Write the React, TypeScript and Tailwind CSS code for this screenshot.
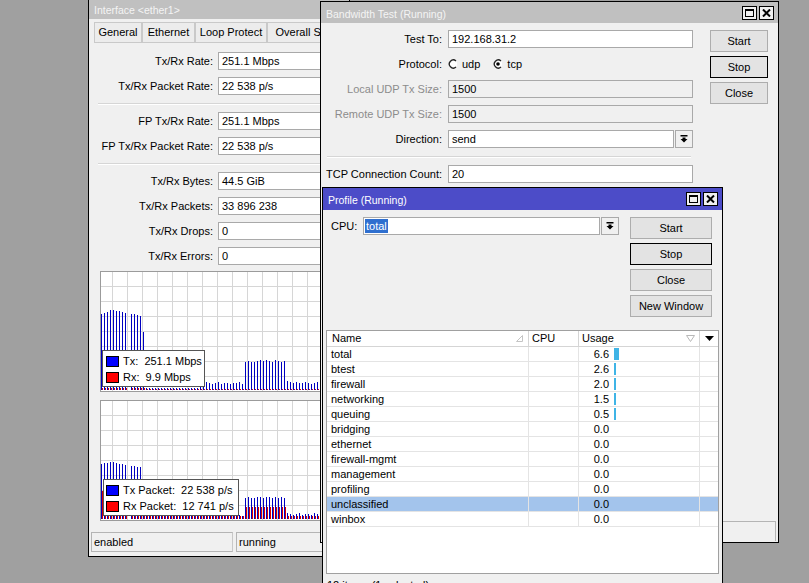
import React from 'react';

const range = (n: number, f: (i: number) => number) => Array.from({ length: n }, (_, i) => f(i));

const tx1 = range(84, (i) => {
  if (i <= 8) return [76, 77, 78, 80, 80, 79, 79, 78, 77][i];
  if (i === 9) return 0;
  if (i <= 13) return [76, 76, 75, 74][i - 10];
  if (i === 14) return 58;
  if (i < 33) return 2;
  if (i < 48) return [11, 9, 8, 7, 6, 7, 8, 6, 7, 7, 6, 7, 7, 8, 6][i - 33];
  if (i < 62) return [28, 29, 28, 28, 29, 30, 29, 30, 29, 28, 30, 29, 28, 29][i - 48];
  return [9, 8, 7, 8, 7, 7, 8, 7, 6, 7, 8, 7, 7, 6, 7, 8, 7, 7, 8, 7, 7, 8][i - 62] ?? 7;
});
const rx1 = range(84, (i) => (i === 9 ? 0 : i < 15 ? 2 : 1));

const tx2 = range(84, (i) => {
  if (i <= 8) return [55, 56, 56, 57, 57, 56, 55, 55, 54][i];
  if (i === 9) return 0;
  if (i <= 13) return [53, 53, 52, 52][i - 10];
  if (i === 14) return 40;
  if (i < 48) return i % 2 ? 3 : 4;
  if (i < 62) return [21, 22, 21, 21, 22, 22, 21, 22, 22, 21, 22, 21, 22, 21][i - 48];
  return [6, 5, 4, 5, 6, 4, 5, 5, 4, 6, 5, 4, 5, 6, 4, 5, 5, 4, 6, 5, 4, 5][i - 62] ?? 5;
});
const rx2 = range(84, (i) => {
  if (i === 9) return 0;
  if (i <= 14) return [28, 29, 30, 30, 29, 29, 28, 29, 28][i] ?? 28;
  if (i < 48) return 3;
  if (i < 62) return 12;
  return 3;
});

const WinButtons = () => (
  <div className="flex gap-[2px]">
    <div className="w-[15px] h-[14px] border border-black bg-[#f0f0f0] flex items-center justify-center">
      <div className="w-[9px] h-[8px] border border-black border-t-2" />
    </div>
    <div className="w-[15px] h-[14px] border border-black bg-[#f0f0f0] flex items-center justify-center">
      <svg width="9" height="8" viewBox="0 0 9 8">
        <path d="M1 0.5 L8 7.5 M8 0.5 L1 7.5" stroke="black" strokeWidth="2" />
      </svg>
    </div>
  </div>
);

const DropArrow = () => (
  <svg width="8" height="8" viewBox="0 0 8 8">
    <rect x="0.5" y="0" width="7" height="1.5" fill="black" />
    <path d="M2.5 2.5h3v1.5h2L4 7.5 0.5 4h2z" fill="black" />
  </svg>
);

const Radio = ({ checked }: { checked?: boolean }) => (
  <svg width="10" height="10" viewBox="0 0 10 10">
    <circle cx="5" cy="5" r="4" fill="white" />
    <path d="M8 2 A4 4 0 1 0 8 8" fill="none" stroke="#222" strokeWidth="1.3" />
    {checked && <circle cx="5" cy="5" r="1.8" fill="black" />}
  </svg>
);

const Box = ({ value, disabled, className = '' }: { value: string; disabled?: boolean; className?: string }) => (
  <div
    className={`h-[18px] border border-[#a9a9a9] flex items-center pl-[3px] whitespace-nowrap overflow-hidden ${
      disabled ? 'bg-[#f0f0f0]' : 'bg-white'
    } ${className}`}
  >
    {value}
  </div>
);

const Btn = ({ children, focus, className = '' }: { children: React.ReactNode; focus?: boolean; className?: string }) => (
  <div
    className={`h-[22px] flex items-center justify-center border bg-[#e3e3e3] ${
      focus ? 'border-black' : 'border-[#adadad]'
    } ${className}`}
  >
    {children}
  </div>
);

const Separator = ({ className = '' }: { className?: string }) => (
  <div className={`h-[2px] border-t border-[#d6d6d6] border-b border-b-white ${className}`} />
);

const Graph = ({ tx, rx, children }: { tx: number[]; rx: number[]; children: React.ReactNode }) => {
  const W = 250;
  const H = 121;
  return (
    <div className="relative w-[250px] h-[121px]">
      <svg width={W} height={H} className="block">
        <rect x="0.5" y="0.5" width={W - 1} height={H - 1} fill="white" stroke="#9b9b9b" />
        {range(16, (k) => 12 + 15 * k).map((x) => (
          <line key={'v' + x} x1={x + 0.5} x2={x + 0.5} y1={1} y2={H - 1} stroke="#d6d6d6" />
        ))}
        {range(7, (k) => 15 + 15 * k).map((y) => (
          <line key={'h' + y} x1={1} x2={W - 1} y1={y + 0.5} y2={y + 0.5} stroke="#d6d6d6" />
        ))}
        {tx.map((h, i) =>
          h > 0 ? <rect key={'t' + i} x={1 + 3 * i} y={H - 2 - h} width={1} height={h} fill="#0000c0" /> : null
        )}
        {rx.map((h, i) =>
          h > 0 ? <rect key={'r' + i} x={2 + 3 * i} y={H - 2 - h} width={1} height={h} fill="#d80000" /> : null
        )}
      </svg>
      {children}
    </div>
  );
};

const LegendRow = ({ color, label }: { color: string; label: string }) => (
  <div className="flex items-center h-[16px] whitespace-pre">
    <div className={`w-[13px] h-[11px] border border-black ${color}`} />
    <span className="ml-[4px]">{label}</span>
  </div>
);

const InterfaceWindow = () => {
  const groups = [
    [
      ['Tx/Rx Rate:', '251.1 Mbps'],
      ['Tx/Rx Packet Rate:', '22 538 p/s'],
    ],
    [
      ['FP Tx/Rx Rate:', '251.1 Mbps'],
      ['FP Tx/Rx Packet Rate:', '22 538 p/s'],
    ],
    [
      ['Tx/Rx Bytes:', '44.5 GiB'],
      ['Tx/Rx Packets:', '33 896 238'],
      ['Tx/Rx Drops:', '0'],
      ['Tx/Rx Errors:', '0'],
    ],
  ];
  const tabs = [
    ['General', 'w-[48px]'],
    ['Ethernet', 'w-[53px]'],
    ['Loop Protect', 'w-[72px]'],
    ['Overall Stats', 'w-[80px]'],
  ];
  return (
    <div className="absolute left-[88px] top-[-2px] w-[262px] h-[559px] border border-black bg-[#f0f0f0] flex flex-col overflow-hidden">
      <div className="h-[20px] shrink-0 bg-[#c0c0c0] text-[#f4f4f4] text-[10.5px] flex items-center pl-[5px] pt-[2px]">
        Interface &lt;ether1&gt;
      </div>
      <div className="flex mt-[3px] ml-[5px] h-[21px] shrink-0">
        {tabs.map(([t, w]) => (
          <div
            key={t}
            className={`${w} shrink-0 border border-[#c9c9c9] bg-[#ececec] flex items-center justify-center whitespace-nowrap`}
          >
            {t}
          </div>
        ))}
      </div>
      {groups.map((g, gi) => (
        <React.Fragment key={gi}>
          {gi > 0 && <Separator className="mt-[8px] ml-[9px] shrink-0" />}
          <div className={`flex flex-col gap-[7px] ${gi === 0 ? 'mt-[9px]' : 'mt-[7px]'}`}>
            {g.map(([l, v]) => (
              <div key={l} className="flex items-center">
                <div className="w-[124px] shrink-0 text-right whitespace-nowrap">{l}</div>
                <Box value={v} className="ml-[5px] w-[125px] shrink-0" />
              </div>
            ))}
          </div>
        </React.Fragment>
      ))}
      <div className="mt-[6px] ml-[11px] shrink-0">
        <Graph tx={tx1} rx={rx1}>
          <div className="absolute left-[2px] top-[79px] w-[103px] h-[37px] bg-white border border-[#555] pl-[3px] pt-[2px]">
            <LegendRow color="bg-[#0000ff]" label="Tx:  251.1 Mbps" />
            <LegendRow color="bg-[#ff0000]" label="Rx:  9.9 Mbps" />
          </div>
        </Graph>
      </div>
      <div className="mt-[8px] ml-[11px] shrink-0">
        <Graph tx={tx2} rx={rx2}>
          <div className="absolute left-[3px] top-[79px] w-[136px] h-[37px] bg-white border border-[#555] pl-[2px] pt-[2px]">
            <LegendRow color="bg-[#0000ff]" label="Tx Packet:  22 538 p/s" />
            <LegendRow color="bg-[#ff0000]" label="Rx Packet:  12 741 p/s" />
          </div>
        </Graph>
      </div>
      <div className="flex mt-[11px] ml-[2px] gap-[3px] h-[20px] shrink-0">
        <div className="w-[151px] border border-[#b4b4b4] border-r-[#c8c8c8] flex items-center pl-[2px]">enabled</div>
        <div className="w-[120px] border border-[#b4b4b4] flex items-center pl-[2px]">running</div>
      </div>
    </div>
  );
};

const BandwidthWindow = () => {
  const Row = ({ label, children, dim }: { label: string; children: React.ReactNode; dim?: boolean }) => (
    <div className="flex items-center h-[18px]">
      <div className={`w-[121px] shrink-0 text-right whitespace-nowrap ${dim ? 'text-[#8c8c8c]' : ''}`}>{label}</div>
      <div className="ml-[6px] w-[245px] shrink-0 flex">{children}</div>
    </div>
  );
  return (
    <div className="absolute left-[320px] top-[1px] w-[459px] h-[542px] border border-black bg-[#f0f0f0] flex flex-col">
      <div className="h-[21px] shrink-0 bg-[#c0c0c0] text-[#f4f4f4] text-[10.5px] flex items-center justify-between pl-[5px] pr-[4px]">
        <span className="pt-[3px]">Bandwidth Test (Running)</span>
        <WinButtons />
      </div>
      <div className="flex mt-[7px]">
        <div className="w-[372px] flex flex-col">
          <div className="flex flex-col gap-[7px]">
            <Row label="Test To:">
              <Box value="192.168.31.2" className="w-full" />
            </Row>
            <Row label="Protocol:">
              <div className="flex items-center">
                <Radio />
                <span className="ml-[4px]">udp</span>
                <span className="ml-[13px] flex">
                  <Radio checked />
                </span>
                <span className="ml-[4px]">tcp</span>
              </div>
            </Row>
            <Row label="Local UDP Tx Size:" dim>
              <Box value="1500" disabled className="w-full" />
            </Row>
            <Row label="Remote UDP Tx Size:" dim>
              <Box value="1500" disabled className="w-full" />
            </Row>
            <Row label="Direction:">
              <Box value="send" className="w-[226px]" />
              <div className="ml-[1px] w-[18px] h-[18px] border border-[#a9a9a9] bg-[#f0f0f0] flex items-center justify-center">
                <DropArrow />
              </div>
            </Row>
          </div>
          <Separator className="mt-[8px] ml-[6px] w-[364px]" />
          <div className="mt-[7px]">
            <Row label="TCP Connection Count:">
              <Box value="20" className="w-full" />
            </Row>
          </div>
        </div>
        <div className="ml-[17px] flex flex-col gap-[4px]">
          <Btn className="w-[58px]">Start</Btn>
          <Btn className="w-[58px]" focus>
            Stop
          </Btn>
          <Btn className="w-[58px]">Close</Btn>
        </div>
      </div>
      <div className="mt-auto mb-[1px] mx-[2px] h-[20px] border-t border-r border-[#b4b4b4]" />
    </div>
  );
};

const rows: [string, string, number][] = [
  ['total', '6.6', 5],
  ['btest', '2.6', 2],
  ['firewall', '2.0', 2],
  ['networking', '1.5', 2],
  ['queuing', '0.5', 2],
  ['bridging', '0.0', 0],
  ['ethernet', '0.0', 0],
  ['firewall-mgmt', '0.0', 0],
  ['management', '0.0', 0],
  ['profiling', '0.0', 0],
  ['unclassified', '0.0', 0],
  ['winbox', '0.0', 0],
];

const ProfileWindow = () => (
  <div className="absolute left-[322px] top-[187px] w-[401px] h-[420px] border border-black bg-[#f0f0f0] flex flex-col">
    <div className="h-[22px] shrink-0 bg-[#4c4cc8] text-white text-[10.5px] flex items-center justify-between pl-[5px] pr-[4px]">
      <span className="pt-[2px]">Profile (Running)</span>
      <WinButtons />
    </div>
    <div className="flex mt-[7px] ml-[8px]">
      <div className="flex items-start">
        <div className="w-[32px] h-[18px] flex items-center">CPU:</div>
        <div className="w-[237px] h-[18px] border border-[#a9a9a9] bg-white flex items-center pl-[1px]">
          <span className="bg-[#2f6fcf] text-white px-[1px] h-[14px] flex items-center">total</span>
        </div>
        <div className="ml-[1px] w-[18px] h-[18px] border border-[#a9a9a9] bg-[#f0f0f0] flex items-center justify-center">
          <DropArrow />
        </div>
      </div>
      <div className="ml-[11px] flex flex-col gap-[4px]">
        <Btn className="w-[82px]">Start</Btn>
        <Btn className="w-[82px]" focus>
          Stop
        </Btn>
        <Btn className="w-[82px]">Close</Btn>
        <Btn className="w-[82px]">New Window</Btn>
      </div>
    </div>
    <div className="mt-[13px] mx-[3px] h-[244px] border border-[#a0a0a0] bg-white flex flex-col">
      <div className="grid grid-cols-[202px_50px_121px_1fr] h-[16px] border-b border-[#d5d5d5]">
        <div className="flex items-center justify-between pl-[5px] pr-[5px] border-r border-[#d5d5d5]">
          <span>Name</span>
          <svg width="7" height="7" viewBox="0 0 7 7">
            <path d="M6.5 0.5 L6.5 6.5 L0.5 6.5 Z" fill="none" stroke="#c4c4c4" />
          </svg>
        </div>
        <div className="flex items-center pl-[3px] border-r border-[#d5d5d5]">CPU</div>
        <div className="flex items-center justify-between pl-[3px] pr-[4px] border-r border-[#d5d5d5]">
          <span>Usage</span>
          <svg width="9" height="7" viewBox="0 0 9 7">
            <path d="M0.5 0.5 L8.5 0.5 L4.5 6.5 Z" fill="none" stroke="#b8b8b8" />
          </svg>
        </div>
        <div className="flex items-center justify-center">
          <svg width="9" height="5" viewBox="0 0 9 5">
            <path d="M0 0 L9 0 L4.5 5 Z" fill="black" />
          </svg>
        </div>
      </div>
      {rows.map(([name, val, bar]) => (
        <div
          key={name}
          className={`grid grid-cols-[202px_50px_121px_1fr] h-[15px] border-b border-[#e4e4e4] ${
            name === 'unclassified' ? 'bg-[#a3c4ec]' : ''
          }`}
        >
          <div className="flex items-center pl-[4px] border-r border-[#e4e4e4]">{name}</div>
          <div className="border-r border-[#e4e4e4]" />
          <div className="flex items-center border-r border-[#e4e4e4]">
            <span className="w-[30px] text-right">{val}</span>
            {bar > 0 && <span className="ml-[5px] h-[12px] bg-[#3fb4e6]" style={{ width: bar }} />}
          </div>
          <div />
        </div>
      ))}
    </div>
    <div className="mt-[3px] ml-[4px] h-[16px] flex items-center">12 items (1 selected)</div>
  </div>
);

export default function App() {
  return (
    <div className="relative w-[809px] h-[583px] overflow-hidden bg-[#a0a0a0] font-['Liberation_Sans',Arial,sans-serif] text-[11px] leading-none text-black">
      <InterfaceWindow />
      <BandwidthWindow />
      <ProfileWindow />
    </div>
  );
}
